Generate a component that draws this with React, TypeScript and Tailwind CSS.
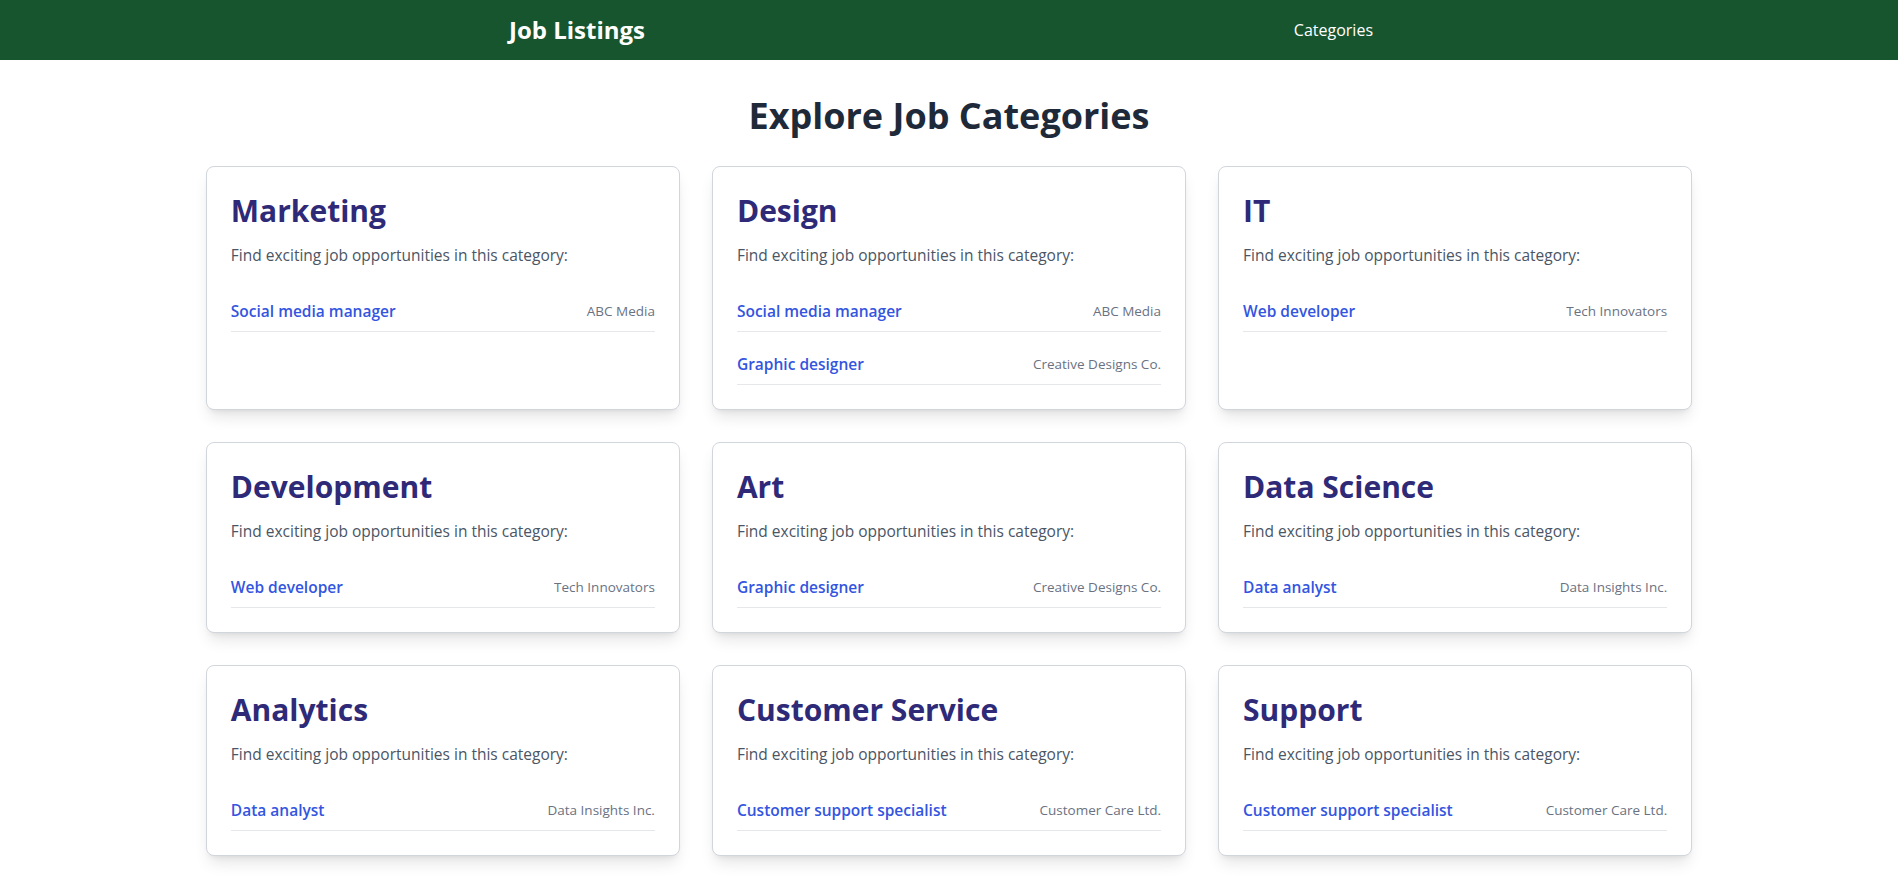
import React from 'react';

interface Job {
  title: string;
  company: string;
}

interface Category {
  name: string;
  jobs: Job[];
}

const categories: Category[] = [
  { name: 'Marketing', jobs: [{ title: 'Social media manager', company: 'ABC Media' }] },
  {
    name: 'Design',
    jobs: [
      { title: 'Social media manager', company: 'ABC Media' },
      { title: 'Graphic designer', company: 'Creative Designs Co.' },
    ],
  },
  { name: 'IT', jobs: [{ title: 'Web developer', company: 'Tech Innovators' }] },
  { name: 'Development', jobs: [{ title: 'Web developer', company: 'Tech Innovators' }] },
  { name: 'Art', jobs: [{ title: 'Graphic designer', company: 'Creative Designs Co.' }] },
  { name: 'Data Science', jobs: [{ title: 'Data analyst', company: 'Data Insights Inc.' }] },
  { name: 'Analytics', jobs: [{ title: 'Data analyst', company: 'Data Insights Inc.' }] },
  { name: 'Customer Service', jobs: [{ title: 'Customer support specialist', company: 'Customer Care Ltd.' }] },
  { name: 'Support', jobs: [{ title: 'Customer support specialist', company: 'Customer Care Ltd.' }] },
];

function CategoryCard({ category }: { category: Category }) {
  return (
    <div className="bg-white border border-gray-300 rounded-lg shadow-lg p-6">
      <h2 className="text-[30px] leading-10 font-bold text-[#2e2a78] mb-3">{category.name}</h2>
      <p className="text-[15.5px] leading-6 text-gray-600 mb-6">Find exciting job opportunities in this category:</p>
      <ul className="space-y-3">
        {category.jobs.map((job, i) => (
          <li key={i} className="flex justify-between items-center py-2 border-b border-gray-200">
            <a href="#" className="text-[15.5px] leading-6 font-semibold text-[#3355e0]">
              {job.title}
            </a>
            <span className="text-[13.5px] text-gray-500">{job.company}</span>
          </li>
        ))}
      </ul>
    </div>
  );
}

export default function App() {
  return (
    <div className="min-h-screen bg-white font-['Open_Sans',sans-serif]">
      {/* ヘッダー */}
      <header className="bg-[#17552f] text-white">
        <nav className="max-w-4xl mx-auto px-2 h-[60px] flex justify-between items-center">
          <h1 className="text-2xl font-bold">Job Listings</h1>
          <a href="#" className="px-4 text-base">Categories</a>
        </nav>
      </header>

      {/* カテゴリ一覧 */}
      <main className="w-4/5 mx-auto px-4 pt-9 pb-8">
        <h2 className="text-4xl leading-10 font-bold text-gray-800 text-center mb-[30px]">Explore Job Categories</h2>
        <div className="grid grid-cols-3 gap-8">
          {categories.map((c) => (
            <CategoryCard key={c.name} category={c} />
          ))}
        </div>
      </main>
    </div>
  );
}
